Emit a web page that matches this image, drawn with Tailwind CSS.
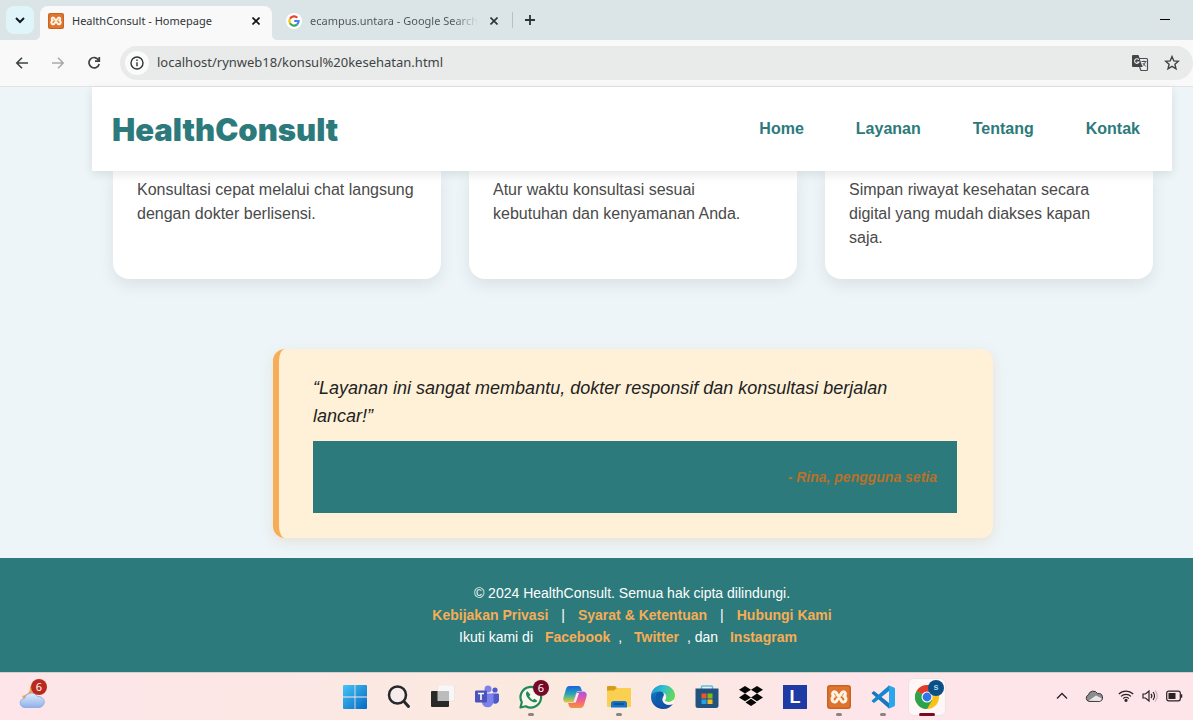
<!DOCTYPE html>
<html lang="id">
<head>
<meta charset="utf-8">
<meta name="viewport" content="width=device-width, initial-scale=1">
<title>HealthConsult - Homepage</title>
<script src="https://cdn.jsdelivr.net/npm/@tailwindcss/browser@4"></script>
</head>
<body class="flex min-h-screen flex-col overflow-x-hidden bg-[#edf5f9] font-['Liberation_Sans',Arial,sans-serif] text-base">

<!-- Shared symbols -->
<svg class="hidden" aria-hidden="true">
  <symbol id="xampp" viewBox="0 0 24 24">
    <rect width="24" height="24" rx="3" fill="#c9641f"/>
    <rect x="1.5" y="1.5" width="21" height="21" rx="2" fill="#de7430"/>
    <path d="M8.700 7.200C5.800 5.500 4.300 9.500 7.200 11.200C3.600 12.800 5 18.300 8.600 16.800C10.800 15.800 9.800 13.200 12 13.200C14.200 13.200 13.200 15.800 15.400 16.800C19 18.300 20.400 12.800 16.800 11.200C19.700 9.500 18.200 5.500 15.300 7.200C13.500 8.300 14.300 10.700 12 10.700C9.700 10.700 10.500 8.300 8.700 7.200Z" fill="none" stroke="#fff3e3" stroke-width="3" stroke-linejoin="round"/>
  </symbol>
</svg>

<!-- Tab strip -->
<div class="flex h-10 items-end bg-[#dbe4e7] font-['Noto_Sans','Open_Sans',sans-serif] text-[11px] text-[#303538]">
  <button aria-label="Cari tab" class="mb-1.5 ml-1.5 grid h-7 w-7 place-items-center rounded-lg bg-[#e0f5fa]">
    <svg width="10" height="7" viewBox="0 0 10 7" fill="none" stroke="#15191b" stroke-width="2"><path d="M1 1l4 4 4-4"/></svg>
  </button>
  <svg class="h-1.5 w-1.5" viewBox="0 0 6 6"><path d="M6 0v6H0c4 0 6-2 6-6z" fill="#f9f9f9"/></svg>
  <div class="flex h-[34px] w-[232px] items-center rounded-t-lg bg-[#f9f9f9] pr-[9px] pb-1 pl-2">
    <svg width="16" height="16" class="shrink-0"><use href="#xampp"/></svg>
    <span class="ml-2 grow whitespace-nowrap">HealthConsult - Homepage</span>
    <button aria-label="Tutup tab" class="grid h-3.5 w-3.5 place-items-center">
      <svg width="8" height="8" viewBox="0 0 8 8" stroke="#111" stroke-width="1.600"><path d="M.5.5l7 7M7.500.5l-7 7"/></svg>
    </button>
  </div>
  <svg class="h-1.5 w-1.5" viewBox="0 0 6 6"><path d="M0 0v6h6C2 6 0 4 0 0z" fill="#f9f9f9"/></svg>
  <div class="flex h-[34px] w-[226px] items-center pb-1 pl-2 text-[#5a6265]">
    <svg width="16" height="16" viewBox="0 0 16 16" class="shrink-0">
      <circle cx="8" cy="8" r="8" fill="#fff"/>
      <g fill="none" stroke-width="2.200"><path d="M11.300 4.700A4.700 4.700 0 0 0 4 5.700" stroke="#ea4335"/><path d="M4 5.700a4.700 4.700 0 0 0 0 4.700" stroke="#fbbc05"/><path d="M4 10.300a4.700 4.700 0 0 0 7 1.300" stroke="#34a853"/><path d="M11 11.600A4.600 4.600 0 0 0 12.600 8H8.200" stroke="#4285f4"/></g>
    </svg>
    <span class="ml-2 w-[168px] overflow-hidden bg-linear-to-r from-[#4b5356] from-85% to-[#dbe4e7] bg-clip-text whitespace-nowrap text-transparent">ecampus.untara - Google Search</span>
    <button aria-label="Tutup tab" class="ml-[9px] grid h-3.5 w-3.5 place-items-center">
      <svg width="8" height="8" viewBox="0 0 8 8" stroke="#2d3436" stroke-width="1.600"><path d="M.5.5l7 7M7.500.5l-7 7"/></svg>
    </button>
  </div>
  <div class="mb-3 ml-2 h-4 w-px bg-[#b4c1c5]"></div>
  <button aria-label="Tab baru" class="mb-3 ml-[9px] grid h-4 w-4 place-items-center">
    <svg width="12" height="12" viewBox="0 0 12 12" stroke="#2d3436" stroke-width="1.800"><path d="M6 1v10M1 6h10"/></svg>
  </button>
  <button aria-label="Minimalkan" class="mr-5 mb-3 ml-auto grid h-4 w-4 place-items-center">
    <svg width="10" height="2" viewBox="0 0 10 2"><path d="M0 0h10v1H0z" fill="#000"/></svg>
  </button>
</div>

<!-- Address bar -->
<div class="flex h-[47px] items-center border-b border-[#dfe3e4] bg-[#f9f9f9]">
  <button aria-label="Kembali" class="ml-3.5 grid h-4 w-4 place-items-center">
    <svg width="14" height="12" viewBox="0 0 14 12" fill="none" stroke="#3c4245" stroke-width="1.600"><path d="M13 6H2M7 .8L1.800 6 7 11.200"/></svg>
  </button>
  <button aria-label="Maju" class="ml-5 grid h-4 w-4 place-items-center">
    <svg width="14" height="12" viewBox="0 0 14 12" fill="none" stroke="#a7aaab" stroke-width="1.500"><path d="M1 6h11M7 .8L12.200 6 7 11.200"/></svg>
  </button>
  <button aria-label="Muat ulang" class="ml-5 grid h-4 w-4 place-items-center">
    <svg width="14" height="14" viewBox="0 0 14 14" fill="none" stroke="#3c4245" stroke-width="1.700"><path d="M11.600 4A5.200 5.200 0 1 0 12.200 8M12.300 1v4.200H8"/></svg>
  </button>
  <div class="ml-[18px] flex h-[34px] min-w-0 grow items-center rounded-full bg-[#e8ebea] pr-[11px] pl-[5px]">
    <button aria-label="Info situs" class="grid h-6 w-6 shrink-0 place-items-center rounded-full bg-[#fbfbfb]">
      <svg width="14" height="14" viewBox="0 0 14 14" fill="none" stroke="#2f3335" stroke-width="1.400"><circle cx="7" cy="7" r="6"/><path d="M7 6.300v4M7 3.600v1.500"/></svg>
    </button>
    <input aria-label="Alamat" value="localhost/rynweb18/konsul%20kesehatan.html" class="ml-2 min-w-0 grow bg-transparent font-['Noto_Sans','Open_Sans',sans-serif] text-[13px] text-[#3f4345] outline-none">
    <button aria-label="Terjemahkan" class="grid h-5 w-5 shrink-0 place-items-center">
      <svg width="18" height="18" viewBox="0 0 18 18"><path d="M8 4.500h7.500a1 1 0 0 1 1 1v10a1 1 0 0 1-1 1H10L8.600 13" fill="#eef0f0" stroke="#4a4f51" stroke-width="1.200"/><path d="M2 1h5.500l4 12H2a1 1 0 0 1-1-1V2a1 1 0 0 1 1-1z" fill="#414648"/><path d="M7.800 5.700A2.300 2.300 0 1 0 8 8H5.800" fill="none" stroke="#eee" stroke-width="1.100"/><path d="M10.500 7.500h5M12.900 6.500v1M14.500 7.500c-.5 2-1.500 3.500-3 4.500M11.800 9l3 3.500" fill="none" stroke="#4a4f51"/></svg>
    </button>
    <button aria-label="Tandai halaman" class="ml-3 grid h-5 w-5 shrink-0 place-items-center">
      <svg width="16" height="16" viewBox="0 0 16 16" fill="none" stroke="#3c4245" stroke-width="1.400"><path d="M8 1.600l1.800 4.300 4.600.4-3.500 3 1.100 4.500L8 11.400l-4 2.400 1.100-4.500-3.500-3 4.600-.4z"/></svg>
    </button>
  </div>
</div>

<!-- Web page -->
<div class="flex grow flex-col">
  <div class="pr-[21px] pl-[92px]">
    <header class="relative z-10 flex h-21 items-center justify-between bg-white pr-5 pl-5 shadow-[0_3px_10px_rgba(0,0,0,0.1)]">
      <h1 class="pt-0.5 font-['Arial_Black','Inter',sans-serif] text-[31px] leading-10 font-black text-[#2c7a7b]">HealthConsult</h1>
      <nav class="flex gap-7 font-bold text-[#2c7a7b]">
        <a href="#home" class="px-3">Home</a>
        <a href="#layanan" class="px-3">Layanan</a>
        <a href="#tentang" class="px-3">Tentang</a>
        <a href="#kontak" class="px-3">Kontak</a>
      </nav>
    </header>
    <main class="pr-[19px] pl-[21px]">
      <section class="grid grid-cols-3 gap-7 leading-6 text-[#4a4a4a]">
        <article class="rounded-b-2xl bg-white pt-[7px] pr-[26px] pb-[29px] pl-6 shadow-[0_6px_16px_rgba(0,0,0,0.08)]"><p>Konsultasi cepat melalui chat langsung dengan dokter berlisensi.</p></article>
        <article class="rounded-b-2xl bg-white pt-[7px] pr-[26px] pb-[29px] pl-6 shadow-[0_6px_16px_rgba(0,0,0,0.08)]"><p>Atur waktu konsultasi sesuai kebutuhan dan kenyamanan Anda.</p></article>
        <article class="rounded-b-2xl bg-white pt-[7px] pr-[26px] pb-[29px] pl-6 shadow-[0_6px_16px_rgba(0,0,0,0.08)]"><p>Simpan riwayat kesehatan secara digital yang mudah diakses kapan saja.</p></article>
      </section>
      <section class="mx-auto mt-[70px] max-w-[720px] rounded-xl border-l-6 border-[#f6ad55] bg-[#fef1d8] pt-[25px] pr-9 pb-[25px] pl-[34px] shadow-[0_4px_14px_rgba(192,120,40,0.15)]">
        <p class="max-w-[620px] text-lg leading-7 text-[#222] italic">“Layanan ini sangat membantu, dokter responsif dan konsultasi berjalan lancar!”</p>
        <div class="mt-[11px] flex h-18 items-center justify-end bg-[#2c7a7b] px-5 text-sm font-bold text-[#b7712b] italic">- Rina, pengguna setia</div>
      </section>
    </main>
  </div>
  <footer class="mt-5 grow bg-[#2c7a7b] pt-6 pb-6 pl-[71px] text-center text-sm leading-[22px] text-white">
    <p>© 2024 HealthConsult. Semua hak cipta dilindungi.</p>
    <p class="flex justify-center gap-[13px]"><a href="#privasi" class="font-bold text-[#f6ad55]">Kebijakan Privasi</a><span>|</span><a href="#syarat" class="font-bold text-[#f6ad55]">Syarat &amp; Ketentuan</a><span>|</span><a href="#kontak" class="font-bold text-[#f6ad55]">Hubungi Kami</a></p>
    <p>Ikuti kami di <a href="#facebook" class="mx-2 font-bold text-[#f6ad55]">Facebook</a>, <a href="#twitter" class="mx-2 font-bold text-[#f6ad55]">Twitter</a>, dan <a href="#instagram" class="mx-2 font-bold text-[#f6ad55]">Instagram</a></p>
  </footer>
</div>

<!-- Taskbar -->
<div class="flex h-12 items-center border-t border-[#d5cfd0] bg-linear-to-r from-[#fde5e9] via-[#fbeadf] via-50% to-[#fde5e9] to-70%">
  <div class="w-[333px] shrink-0 pl-[18px]">
    <button aria-label="Cuaca, 6 pemberitahuan" class="relative block h-8 w-8">
      <svg width="32" height="32" viewBox="0 0 32 32"><defs><linearGradient id="cloud" x2="0" y2="1"><stop stop-color="#e2ecfb"/><stop offset="1" stop-color="#8eb2ec"/></linearGradient></defs><path d="M12 5c1 6-3 9-8 10 2 5 11 5 14 0V6z" fill="#f0a548"/><path d="M7 26.500a4.600 4.600 0 0 1-.5-9.200A7 6.500 0 0 1 19.500 15.500a6 5.500 0 0 1 1.500 11z" fill="url(#cloud)" stroke="#86a6dc" stroke-width=".8"/></svg>
      <span class="absolute -top-0.5 left-[13px] grid h-4 w-4 place-items-center rounded-full bg-[#b92a1e] font-['Noto_Sans',sans-serif] text-[11px] leading-none text-white">6</span>
    </button>
  </div>
  <button aria-label="Mulai" class="grid h-12 w-11 shrink-0 place-items-center">
    <svg width="24" height="24" viewBox="0 0 24 24"><defs><linearGradient id="win" x2="1" y2="1"><stop stop-color="#45c5f6"/><stop offset="1" stop-color="#0568c4"/></linearGradient></defs><path d="M1 0h10.600v11.600H0V1a1 1 0 0 1 1-1zM12.400 0H23a1 1 0 0 1 1 1v10.600H12.400zM0 12.400h11.600V24H1a1 1 0 0 1-1-1zM12.400 12.400H24V23a1 1 0 0 1-1 1H12.400z" fill="url(#win)"/></svg>
  </button>
  <button aria-label="Cari" class="grid h-12 w-11 shrink-0 place-items-center">
    <svg width="24" height="24" viewBox="0 0 24 24" fill="none" stroke="#26282b"><circle cx="10.500" cy="10" r="8.500" stroke-width="2.500" fill="#f6eceb"/><path d="M17 16.500l4.500 5" stroke-width="3" stroke-linecap="round"/></svg>
  </button>
  <button aria-label="Tampilan tugas" class="grid h-12 w-11 shrink-0 place-items-center">
    <svg width="24" height="24" viewBox="0 0 24 24"><rect x="6.500" y="0" width="17" height="16" rx="1" fill="#f7f7f7" stroke="#ddd" stroke-width=".5"/><rect x="0" y="6" width="18" height="16" rx="1" fill="#292929"/><path d="M6.500 6H18v10H6.500z" fill="#bcbcbc"/></svg>
  </button>
  <button aria-label="Teams" class="grid h-12 w-11 shrink-0 place-items-center">
    <svg width="24" height="24" viewBox="0 0 24 24"><circle cx="20" cy="5" r="2.600" fill="#5059c9"/><circle cx="13" cy="4" r="3.500" fill="#7b83eb"/><path d="M17 8.500h6a1 1 0 0 1 1 1V15c0 4-5 5-7 2z" fill="#5059c9"/><path d="M7 8.500h11.500V16c0 8-10.500 8-11.500 2z" fill="#7b83eb"/><rect y="5.500" width="12" height="12" rx="1.200" fill="#4b53bc"/><path d="M3 8.500h6M6 8.500v6.500" stroke="#fff" stroke-width="1.600"/></svg>
  </button>
  <button aria-label="WhatsApp, 6 pesan" class="relative grid h-12 w-11 shrink-0 place-items-center">
    <svg width="24" height="24" viewBox="0 0 24 24"><path d="M2.800 17.200A10.300 10.300 0 1 1 6.800 21.200L1.500 22.500z" fill="#fbf4ee" stroke="#1f8a55" stroke-width="2.200" stroke-linejoin="round"/><path d="M8.600 6.200c-3 1.200-1.300 5.500 1.500 8.200s7 4.400 8.200 1.300l-3-2-1.500 1.200c-1.500-.7-3-2.100-3.600-3.600l1.200-1.500z" fill="#1f8a55"/></svg>
    <span class="absolute top-[7px] right-1 grid h-4 w-4 place-items-center rounded-full bg-[#750a26] font-['Noto_Sans',sans-serif] text-[11px] leading-none text-white">6</span>
    <span class="absolute bottom-[5px] h-[3px] w-1.5 rounded-full bg-[#8c8482]"></span>
  </button>
  <button aria-label="Copilot" class="grid h-12 w-11 shrink-0 place-items-center">
    <svg width="24" height="24" viewBox="0 0 24 24"><defs><linearGradient id="coA" x2="0" y2="1"><stop stop-color="#1a62dc"/><stop offset=".5" stop-color="#28a9b4"/><stop offset="1" stop-color="#e5ce30"/></linearGradient><linearGradient id="coB" x2="0" y2="1"><stop stop-color="#a456e8"/><stop offset=".5" stop-color="#ed5a94"/><stop offset="1" stop-color="#f8943d"/></linearGradient></defs><path d="M6.500 1h8.700c2 0 2.600 1.200 3.200 3.300L19 6h-3c-2 0-2.500 1-3 2.600L11 15c-.5 1.700-1 2.500-3 2.500H4c-3 0-4.300-2-3.500-5L3 4c.6-2 1.600-3 3.500-3z" fill="url(#coA)"/><path d="M17.500 23H8.800c-2 0-2.600-1.200-3.200-3.300L5 18h3c2 0 2.500-1 3-2.600L13 9c.5-1.700 1-2.500 3-2.500h4c3 0 4.300 2 3.500 5L21 20c-.6 2-1.600 3-3.500 3z" fill="url(#coB)"/><path d="M13.600 8H16l-3.200 9.500H9.700c1-.5 1.200-1.300 1.600-2.500z" fill="#fbeef1"/></svg>
  </button>
  <button aria-label="File Explorer" class="relative grid h-12 w-11 shrink-0 place-items-center">
    <svg width="24" height="24" viewBox="0 0 24 24"><path d="M0 2a1 1 0 0 1 1-1h7l3 3h-2L7 7H0z" fill="#d79b1d"/><path d="M0 5.500h7L10 3h13a1 1 0 0 1 1 1v17a1 1 0 0 1-1 1H1a1 1 0 0 1-1-1z" fill="#fbd050"/><path d="M4 22.500v-4A2.500 2.500 0 0 1 6.500 16h11a2.500 2.500 0 0 1 2.500 2.500v4z" fill="#1672c5"/><path d="M7.500 19h9" stroke="#0a4c91" stroke-width="1.300" stroke-linecap="round"/></svg>
    <span class="absolute bottom-[5px] h-[3px] w-1.5 rounded-full bg-[#8c8482]"></span>
  </button>
  <button aria-label="Edge" class="grid h-12 w-11 shrink-0 place-items-center">
    <svg width="24" height="24" viewBox="0 0 24 24"><defs><linearGradient id="edA" x2="1" y2=".4"><stop stop-color="#1b8fd4"/><stop offset=".5" stop-color="#2fc0d0"/><stop offset="1" stop-color="#62d85c"/></linearGradient><linearGradient id="edB" x2="0" y2="1"><stop stop-color="#1688d3"/><stop offset="1" stop-color="#104a9e"/></linearGradient></defs><path d="M12 0C5.300 0 0 5.400 0 12s5.300 12 12 12c4.300 0 7.900-2 10-5.300-5 2.500-10 .3-10.300-3.700-.1-1.800 1-2.600 1-4.500z" fill="url(#edB)"/><path d="M.2 10C1 4.300 6 0 12 0c7 0 12 5 12 10.500 0 4-3 6.500-6.500 6.500-3 0-3.600-1-3.600-1.700s1.300-1.300 1.300-3.600C15.200 8.500 12 6.500 8.500 6.500 4.500 6.500 1.300 8 .2 10z" fill="url(#edA)"/><path d="M8.500 6.700C4 7 3 15 8 20c2 2.500 5.500 3.800 8.500 3-5-.5-8-4.500-7.500-8.500.3-2.500 2-4 4-4.500-1-2-2.700-3-4.500-3.300z" fill="#0d5bab"/><path d="M15.100 12.500c-.2 1.700-1.200 2.300-1.200 2.800 0 .7.600 1.700 3.600 1.700 2 0 3.600-.7 4.800-1.900l1 1.900-1.200 2C16 21 11.500 18 11.500 14.500c0-1.500.7-3 1.800-3.800z" fill="#fff5f0"/></svg>
  </button>
  <button aria-label="Microsoft Store" class="grid h-12 w-11 shrink-0 place-items-center">
    <svg width="24" height="24" viewBox="0 0 24 24"><path d="M6.500 4V1.800c0-.5.400-.8.800-.8h9.400c.4 0 .8.300.8.800V4" fill="none" stroke="#4ec5ee" stroke-width="1.500"/><path d="M.5 3.500h23v17A2.500 2.500 0 0 1 21 23H3a2.500 2.500 0 0 1-2.500-2.500z" fill="#24527f"/><path d="M6.500 8.500h5v5h-5z" fill="#ef5428"/><path d="M12.500 8.500h5v5h-5z" fill="#80bb1a"/><path d="M6.500 14.500h5v4.500h-5z" fill="#23a3eb"/><path d="M12.500 14.500h5v4.500h-5z" fill="#fcb81a"/></svg>
  </button>
  <button aria-label="Dropbox" class="grid h-12 w-11 shrink-0 place-items-center">
    <svg width="24" height="22" viewBox="0 0 24 22"><path d="M6 0l6 3.800-6 3.800-6-3.800zM18 0l6 3.800-6 3.800-6-3.800zM6 7.600l6 3.800-6 3.800-6-3.800zM18 7.600l6 3.800-6 3.800-6-3.800zM12 12.800l5.500 3.600L12 20l-5.500-3.600z" fill="#070707"/></svg>
  </button>
  <button aria-label="L" class="grid h-12 w-11 shrink-0 place-items-center">
    <span class="grid h-6 w-6 place-items-center bg-[#1d3aa5] text-lg leading-none font-bold text-white">L</span>
  </button>
  <button aria-label="XAMPP" class="relative grid h-12 w-11 shrink-0 place-items-center">
    <svg width="24" height="24"><use href="#xampp"/></svg>
    <span class="absolute bottom-[5px] h-[3px] w-1.5 rounded-full bg-[#8c8482]"></span>
  </button>
  <button aria-label="Visual Studio Code" class="relative grid h-12 w-11 shrink-0 place-items-center">
    <svg width="24" height="24" viewBox="0 0 24 24"><path d="M1.300 7.200L3 6l15 12v5.500L.8 8.500a1 1 0 0 1 .5-1.300z" fill="#1677bd"/><path d="M1.300 16.800L3 18 18 6V.5L.8 15.500a1 1 0 0 0 .5 1.300z" fill="#1587cf"/><path d="M17.500.2L23 2.600a1.500 1.500 0 0 1 1 1.400v16a1.500 1.500 0 0 1-1 1.400l-5.500 2.400c-.5.200-.9 0-1.200-.4.900.5 1.700.2 1.700-1V1.600c0-1.200-.8-1.500-1.700-1 .3-.4.700-.6 1.200-.4z" fill="#29a6ee"/></svg>
    <span class="absolute bottom-[5px] h-[3px] w-1.5 rounded-full bg-[#8c8482]"></span>
  </button>
  <button aria-label="Chrome" class="relative grid h-12 w-11 shrink-0 place-items-center">
    <span class="grid h-[38px] w-[38px] place-items-center rounded-md border border-[#f0e2e4] bg-[#fff6f7]">
      <svg width="24" height="24" viewBox="0 0 24 24"><circle cx="12" cy="12" r="12" fill="#fbc116"/><path d="M12 12L1.600 6A12 12 0 0 1 22.400 6z" fill="#e33b2e"/><path d="M12 12L1.600 6A12 12 0 0 0 12 24l5.200-9z" fill="#2ba24c"/><path d="M12 6.500h10.700A12 12 0 0 0 12 0z" fill="#e33b2e"/><circle cx="12" cy="12" r="5.500" fill="#fff"/><circle cx="12" cy="12" r="4.400" fill="#2d75e8"/></svg>
    </span>
    <span class="absolute top-[7px] right-[5px] grid h-4 w-4 place-items-center rounded-full bg-[#0b4f87] text-[9px] leading-none font-bold text-[#a9d4ee]">s</span>
    <span class="absolute bottom-[5px] h-[3px] w-4 rounded-full bg-[#7b0b24]"></span>
  </button>

  <div class="mr-2.5 mb-0.5 ml-auto flex shrink-0 items-center">
    <button aria-label="Ikon tersembunyi" class="mr-[17px]"><svg width="12" height="8" viewBox="0 0 12 8" fill="none" stroke="#2b2224" stroke-width="1.300"><path d="M1 6.500l5-5 5 5"/></svg></button>
    <button aria-label="OneDrive" class="mr-[15px]"><svg width="18" height="12" viewBox="0 0 18 12"><path d="M4 11.400a3.400 3.400 0 0 1-.6-6.500A5 5 0 0 1 12.600 3.600a4 4 0 0 1 1.900 7.800z" fill="#8c8c8c" stroke="#383536"/><path d="M3.500 10.800L11 5.500l5.500 2.800c0 1.700-.8 2.600-2.200 2.600z" fill="#e9e6e6"/></svg></button>
    <button aria-label="Wi-Fi" class="mr-2"><svg width="16" height="13" viewBox="0 0 16 13" fill="none" stroke="#2b2224" stroke-width="1.200"><path d="M.8 5a10.300 10.300 0 0 1 14.400 0M3 7.400a7.200 7.200 0 0 1 10 0M5.200 9.600a4 4 0 0 1 5.600 0"/><circle cx="8" cy="11.300" r="1" fill="#2b2224"/></svg></button>
    <button aria-label="Volume" class="mr-2"><svg width="16" height="14" viewBox="0 0 16 14" fill="none" stroke="#2b2224" stroke-width="1.200"><path d="M1 5h2.500L7 2v10L3.500 9H1z"/><path d="M9 5a3 3 0 0 1 0 4M11 3.200a5.500 5.500 0 0 1 0 7.600"/><path d="M13 1.500a8 8 0 0 1 0 11" stroke="#c9b9bc"/></svg></button>
    <button aria-label="Baterai"><svg width="17" height="12" viewBox="0 0 17 12"><rect x=".7" y="1.200" width="13.600" height="9.600" rx="2" fill="none" stroke="#2b2224" stroke-width="1.200"/><rect x="2.500" y="3" width="7" height="6" fill="#2b2224"/><path d="M15.500 4.300v3.400" stroke="#2b2224" stroke-width="1.500"/></svg></button>
  </div>
</div>
</body>
</html>
